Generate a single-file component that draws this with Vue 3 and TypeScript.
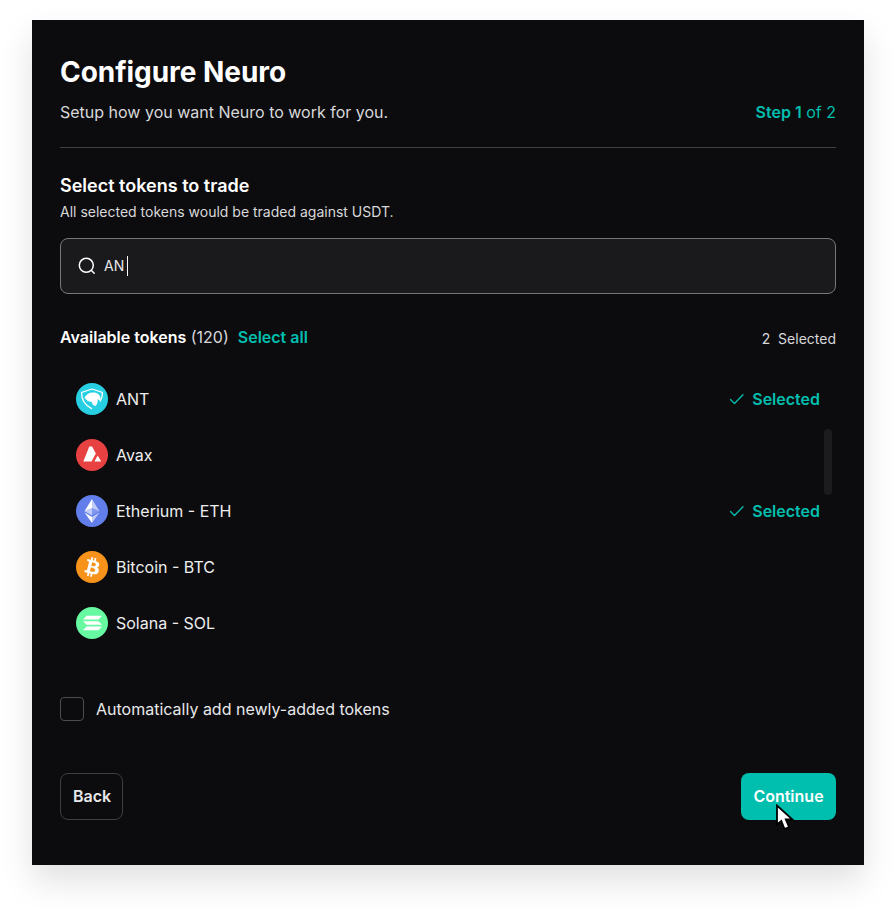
<script setup lang="ts">
interface Token { name: string; selected: boolean; kind: string }
const tokens: Token[] = [
  { name: 'ANT', selected: true, kind: 'ant' },
  { name: 'Avax', selected: false, kind: 'avax' },
  { name: 'Etherium - ETH', selected: true, kind: 'eth' },
  { name: 'Bitcoin - BTC', selected: false, kind: 'btc' },
  { name: 'Solana - SOL', selected: false, kind: 'sol' },
]
</script>

<template>
  <div class="page">
    <main class="card">
      <h1>Configure Neuro</h1>
      <div class="sub">
        <span>Setup how you want Neuro to work for you.</span>
        <span class="step"><b>Step 1</b> of 2</span>
      </div>
      <hr />
      <h2>Select tokens to trade</h2>
      <p class="note">All selected tokens would be traded against USDT.</p>
      <div class="search">
        <svg width="20" height="20" viewBox="0 0 20 20" fill="none" stroke="#fff" stroke-width="1.5" stroke-linecap="round"><circle cx="9.3" cy="9.3" r="7"/><path d="M14.500 14.500 17.200 17.200"/></svg>
        <span class="val">AN</span><i class="caret"></i>
      </div>
      <div class="avail">
        <div><b>Available tokens</b> <span class="cnt">(120)</span><a>Select all</a></div>
        <span class="count">2&nbsp; Selected</span>
      </div>
      <div class="list">
        <div v-for="t in tokens" :key="t.name" class="row">
          <svg v-if="t.kind === 'ant'" class="ico" viewBox="0 0 32 32"><circle cx="16" cy="16" r="16" fill="#27cfe3"/><path d="M16 6 26.400 9.500c.3 3.500-.8 6.500-2.400 9M16 6 5.600 9.500c-.3 7 2.700 12.400 10.400 16.300" fill="none" stroke="#fff" stroke-width="1.300"/><path d="M8.500 14.500c2-3.500 5.500-5.500 10-5 3.500.4 6 3 6.200 6.200l-.8 1.800-2.300-1.200c.5 2.500-.4 5-2 6.700-2.200-.3-3.600-2-3.900-4.300-2.800.2-5.600-1.200-7.200-4.200z" fill="#fff"/></svg>
          <svg v-else-if="t.kind === 'avax'" class="ico" viewBox="0 0 32 32"><circle cx="16" cy="16" r="16" fill="#e84142"/><path d="M13.300 7.500h2.800L19.800 14.500 15.600 22.500H7.300z" fill="#fff"/><path d="M21.700 16.500 25.200 22.500H18.400z" fill="#fff"/></svg>
          <svg v-else-if="t.kind === 'eth'" class="ico" viewBox="0 0 32 32"><circle cx="16" cy="16" r="16" fill="#627eea"/><path d="M16 4v9l7.500 3.300z" fill="#fff" fill-opacity=".6"/><path d="M16 4 8.500 16.300 16 13z" fill="#fff"/><path d="M16 22v6l7.500-10.400z" fill="#fff" fill-opacity=".6"/><path d="M16 22v6L8.500 17.600z" fill="#fff"/><path d="M16 20.600l7.500-4.300L16 13z" fill="#fff" fill-opacity=".2"/><path d="M8.500 16.300 16 20.600V13z" fill="#fff" fill-opacity=".6"/></svg>
          <svg v-else-if="t.kind === 'btc'" class="ico" viewBox="0 0 32 32"><circle cx="16" cy="16" r="16" fill="#f7931a"/><path fill="#fff" d="M23.189 14.020c.314-2.096-1.283-3.223-3.465-3.975l.708-2.840-1.728-.430-.690 2.765c-.454-.114-.920-.220-1.385-.326l.695-2.783L15.596 6l-.708 2.839c-.376-.086-.746-.170-1.104-.260l.002-.009-2.384-.595-.460 1.846s1.283.294 1.256.312c.700.175.826.638.805 1.006l-.806 3.235c.048.012.110.030.180.057l-.183-.045-1.130 4.532c-.086.212-.303.531-.793.410.018.025-1.256-.313-1.256-.313l-.858 1.978 2.250.561c.418.105.828.215 1.231.318l-.715 2.872 1.727.430.708-2.840c.472.127.930.245 1.378.357l-.706 2.828 1.728.430.715-2.866c2.948.558 5.164.333 6.097-2.333.752-2.146-.037-3.385-1.588-4.192 1.130-.260 1.980-1.003 2.207-2.538zm-3.950 5.538c-.533 2.147-4.148.986-5.320.695l.950-3.805c1.172.293 4.929.872 4.370 3.110zm.535-5.569c-.487 1.953-3.495.960-4.470.717l.860-3.450c.975.243 4.118.696 3.610 2.733z"/></svg>
          <svg v-else class="ico" viewBox="0 0 32 32"><circle cx="16" cy="16" r="16" fill="#66f9a1"/><path d="M10.500 8.700H26l-3.500 3.700H7zM7 14.200h15.500l3.500 3.600H10.500zM10.500 19.600H26l-3.500 3.700H7z" fill="#fff"/></svg>
          <span class="name">{{ t.name }}</span>
          <span v-if="t.selected" class="sel">
            <svg width="16" height="16" viewBox="0 0 16 16" fill="none" stroke="#00bfae" stroke-width="1.300" stroke-linecap="round" stroke-linejoin="round"><path d="M1.500 8.500 5.500 12.500 14 3.800"/></svg>
            Selected
          </span>
        </div>
        <div class="thumb"></div>
      </div>
      <label class="auto"><i class="box"></i>Automatically add newly-added tokens</label>
      <div class="actions">
        <button class="back">Back</button>
        <button class="go">Continue
          <svg class="cursor" width="20" height="28" viewBox="0 0 20 28"><path d="M2 1.500V20.500L6.300 17 9.500 25 14 23 10.800 15.500H17.500z" fill="#fff" stroke="#000" stroke-width="1.800"/></svg>
        </button>
      </div>
    </main>
  </div>
</template>

<style>
body { background: #fff; }
</style>

<style scoped>
.page { padding: 20px 32px 44px; font-family: Inter, sans-serif; color: #fff; }
.card { height: 845px; box-sizing: border-box; background: #0c0c0e; padding: 35px 28px 0; box-shadow: 0 16px 32px rgba(0,0,0,.12); display: flex; flex-direction: column; }
h1 { margin: 0; font-size: 28px; line-height: 34px; font-weight: 700; letter-spacing: -.04px; }
.sub { margin-top: 11px; display: flex; justify-content: space-between; font-size: 16px; line-height: 24px; color: #d8d8da; }
.step { color: #00bfae; }
.step b { font-weight: 600; }
hr { width: 100%; margin: 23px 0 0; border: 0; border-top: 1px solid #3f3f42; }
h2 { margin: 26px 0 0; font-size: 18px; line-height: 24px; font-weight: 600; }
.note { margin: 4px 0 0; font-size: 14px; line-height: 20px; color: #d8d8da; }
.search { margin-top: 16px; height: 56px; box-sizing: border-box; border: 1px solid #77777b; border-radius: 8px; background: #1a1a1c; display: flex; align-items: center; padding-left: 16px; font-size: 14px; color: #e8e8ea; }
.val { margin-left: 7px; position: relative; top: -1px; }
.caret { width: 1px; height: 20px; background: #fff; margin-left: 3px; }
.avail { margin-top: 31px; display: flex; justify-content: space-between; align-items: baseline; font-size: 16px; line-height: 24px; }
.avail b { font-weight: 600; }
.cnt { color: #d8d8da; }
.avail a { color: #00bfae; font-weight: 600; margin-left: 9px; }
.count { font-size: 14px; color: #d8d8da; position: relative; top: 1px; }
.list { position: relative; margin-top: 21px; }
.row { height: 56px; display: flex; align-items: center; padding: 0 16px; font-size: 16px; }
.ico { width: 32px; height: 32px; flex: none; }
.name { margin-left: 8px; color: #eee; }
.sel { margin-left: auto; display: flex; align-items: center; gap: 7px; color: #00bfae; font-weight: 600; font-size: 16px; }
.thumb { position: absolute; right: 4px; top: 58px; width: 8px; height: 66px; border-radius: 4px; background: #1c1c1e; }
.auto { margin-top: 46px; display: flex; align-items: center; gap: 12px; font-size: 16px; line-height: 24px; color: #e8e8ea; }
.box { width: 24px; height: 24px; box-sizing: border-box; border: 1px solid #4c4c50; border-radius: 4px; background: #0c0c0e; }
.actions { margin-top: 52px; display: flex; justify-content: space-between; }
button { height: 47px; border-radius: 8px; font: 600 16px Inter, sans-serif; padding: 0 12px 2px; }
.back { background: #0c0c0e; border: 1px solid #3f3f42; color: #e8e8ea; width: 63px; }
.go { position: relative; background: #00bfae; border: 0; color: #fff; width: 95px; }
.cursor { position: absolute; left: 34px; top: 31px; }
</style>
